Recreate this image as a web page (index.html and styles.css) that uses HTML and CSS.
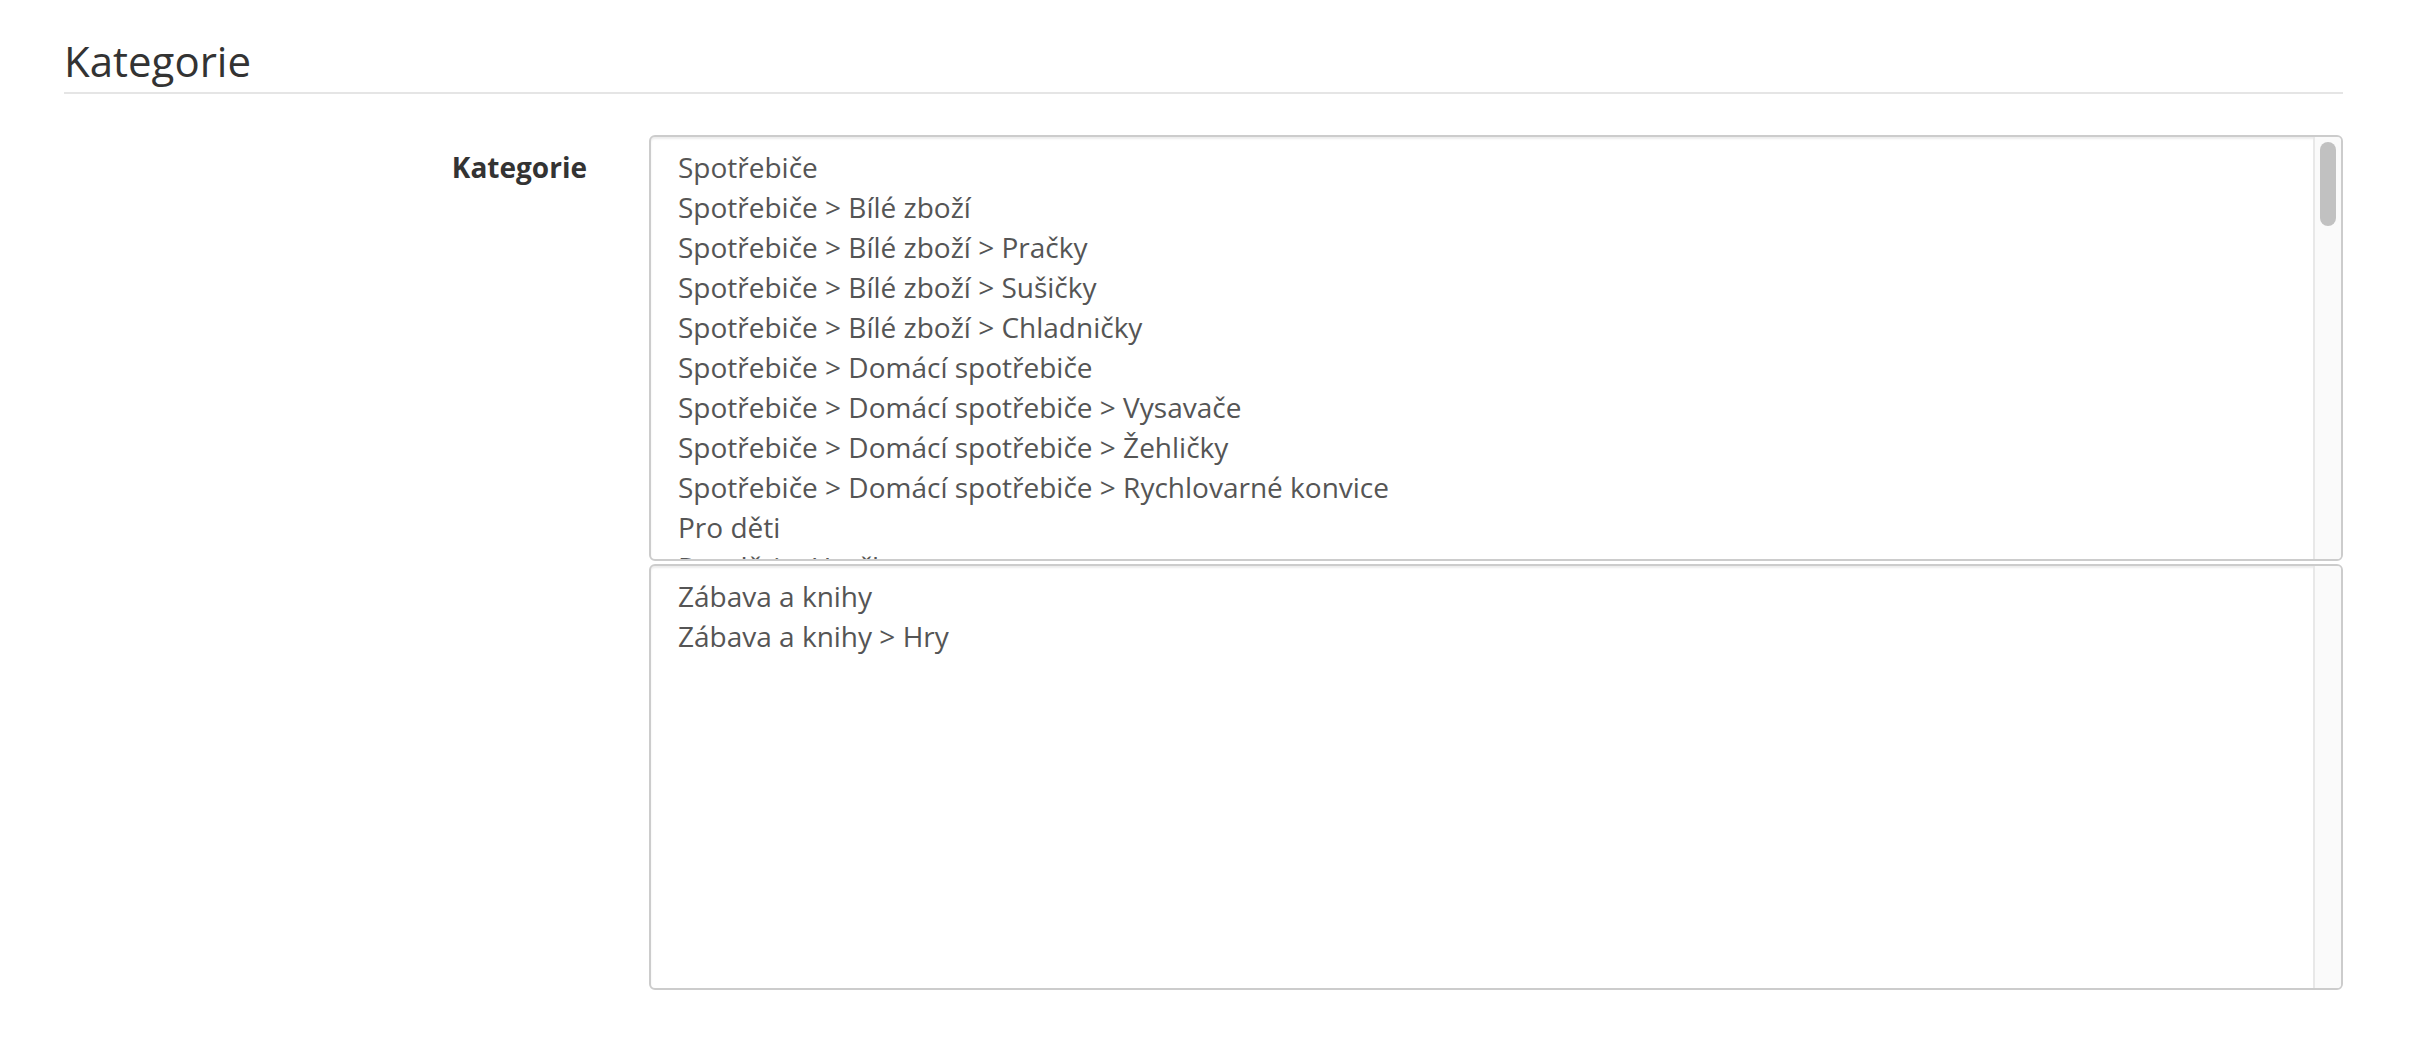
FILE: index.html
```html
<!DOCTYPE html>
<html>
<head>
    <meta charset="UTF-8">
    <title>Kategorie</title>
    <link rel="stylesheet" href="styles.css">
</head>
<body>
<div class="page">
    <h2 class="section-title">Kategorie</h2>

    <div class="form-row">
        <label class="form-label">Kategorie</label>
        <div class="picker">
            <ul class="picker-list">
                <li>Spotřebiče</li>
                <li>Spotřebiče &gt; Bílé zboží</li>
                <li>Spotřebiče &gt; Bílé zboží &gt; Pračky</li>
                <li>Spotřebiče &gt; Bílé zboží &gt; Sušičky</li>
                <li>Spotřebiče &gt; Bílé zboží &gt; Chladničky</li>
                <li>Spotřebiče &gt; Domácí spotřebiče</li>
                <li>Spotřebiče &gt; Domácí spotřebiče &gt; Vysavače</li>
                <li>Spotřebiče &gt; Domácí spotřebiče &gt; Žehličky</li>
                <li>Spotřebiče &gt; Domácí spotřebiče &gt; Rychlovarné konvice</li>
                <li>Pro děti</li>
                <li>Pro děti &gt; Hračky</li>
                <li>Pro děti &gt; Kočárky</li>
            </ul>
            <div class="scrollbar"><span class="scrollbar-thumb"></span></div>
        </div>
        <div class="picker">
            <ul class="picker-list">
                <li>Zábava a knihy</li>
                <li>Zábava a knihy &gt; Hry</li>
            </ul>
            <div class="scrollbar"></div>
        </div>
    </div>
</div>
</body>
</html>
```

FILE: styles.css
```css
* {
    margin: 0;
    padding: 0;
    box-sizing: border-box;
}

ul, li {
    list-style: none;
}

html, body {
    width: 100%;
    height: 100%;
    overflow: hidden;
    background: #fff;
}

body {
    font-family: "Open Sans", "Liberation Sans", sans-serif;
    color: #333;
}

.page {
    padding: 38px 75px 0 64px;
}

.section-title {
    font-size: 42px;
    font-weight: 400;
    line-height: 46px;
    padding-bottom: 8px;
    border-bottom: 2px solid #e5e5e5;
    color: #333;
}

.form-row {
    margin-top: 41px;
    display: grid;
    grid-template-columns: 523px 1fr;
    column-gap: 62px;
    row-gap: 3px;
}

.form-label {
    grid-row: 1 / span 2;
    text-align: right;
    font-size: 28px;
    font-weight: 700;
    line-height: 40px;
    padding-top: 12px;
    color: #333;
}

.picker {
    grid-column: 2;
    display: flex;
    height: 426px;
    border: 2px solid #ccc;
    border-radius: 6px;
    box-shadow: inset 0 2px 2px rgba(0, 0, 0, .075);
    overflow: hidden;
    background: #fff;
}

.picker-list {
    flex: 1;
    overflow: hidden;
    padding: 10px 27px;
}

.picker-list li {
    font-size: 28px;
    line-height: 40px;
    color: #555;
    white-space: nowrap;
}

.scrollbar {
    flex: none;
    width: 28px;
    padding: 5px 5px 0;
    background: #fafafa;
    border-left: 2px solid #e8e8e8;
}

.scrollbar-thumb {
    display: block;
    width: 16px;
    height: 84px;
    border-radius: 8px;
    background: #c1c1c1;
}
```
